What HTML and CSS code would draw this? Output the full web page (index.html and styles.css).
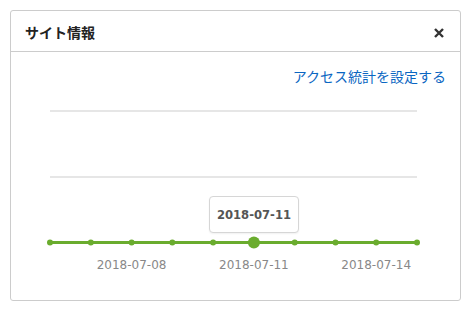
FILE: index.html
```html
<!DOCTYPE html>
<html lang="ja">
<head>
<meta charset="utf-8">
<title>サイト情報</title>
<link rel="stylesheet" href="styles.css">
</head>
<body>
<div class="card">
  <div class="card-header">
    <span class="card-title">サイト情報</span>
    <button class="close" aria-label="閉じる">
      <svg width="10" height="10" viewBox="0 0 10 10"><path d="M1 1L9 9M9 1L1 9" stroke="#333" stroke-width="2.4" stroke-linecap="butt"/></svg>
    </button>
  </div>
  <div class="card-body">
    <div class="link-row"><a class="setup-link" href="#">アクセス統計を設定する</a></div>
    <div class="chart">
      <svg class="chart-svg" width="449" height="214" viewBox="0 0 449 214">
        <line x1="39" y1="25" x2="406" y2="25" stroke="#e6e6e6" stroke-width="2"/>
        <line x1="39" y1="91" x2="406" y2="91" stroke="#e6e6e6" stroke-width="2"/>
        <line x1="39" y1="156.5" x2="406" y2="156.5" stroke="#6aac2e" stroke-width="3"/>
        <g fill="#6aac2e">
          <circle cx="39" cy="156.5" r="3"/>
          <circle cx="79.8" cy="156.5" r="3"/>
          <circle cx="120.6" cy="156.5" r="3"/>
          <circle cx="161.3" cy="156.5" r="3"/>
          <circle cx="202.1" cy="156.5" r="3"/>
          <circle cx="242.9" cy="156.5" r="6"/>
          <circle cx="283.7" cy="156.5" r="3"/>
          <circle cx="324.5" cy="156.5" r="3"/>
          <circle cx="365.2" cy="156.5" r="3"/>
          <circle cx="406" cy="156.5" r="3"/>
        </g>
        <g class="axis-label" text-anchor="middle">
          <text x="120.6" y="183">2018-07-08</text>
          <text x="242.9" y="183">2018-07-11</text>
          <text x="365.2" y="183">2018-07-14</text>
        </g>
      </svg>
      <div class="tooltip">2018-07-11</div>
    </div>
  </div>
</div>
</body>
</html>
```

FILE: styles.css
```css
html, body {
  margin: 0;
  padding: 0;
  background: #fff;
}
body {
  padding: 10px 0 0 10px;
  font-family: "DejaVu Sans", "Noto Sans CJK JP", sans-serif;
}
.card {
  width: 449px;
  height: 289px;
  border: 1px solid #cccccc;
  border-radius: 3px;
  display: flex;
  flex-direction: column;
  background: #fff;
}
.card-header {
  height: 40px;
  border-bottom: 1px solid #cccccc;
  display: flex;
  align-items: center;
  justify-content: space-between;
  padding: 0 16px 0 14px;
}
.card-title {
  font-family: "Noto Sans CJK JP", sans-serif;
  font-weight: 700;
  font-size: 14px;
  color: #222;
  line-height: 20px;
  margin-top: 2px;
}
.close {
  border: 0;
  background: none;
  padding: 0;
  width: 10px;
  height: 10px;
  margin-top: 4px;
  display: flex;
}
.card-body {
  display: flex;
  flex-direction: column;
  padding-top: 14px;
}
.link-row {
  display: flex;
  justify-content: flex-end;
  padding-right: 14px;
  height: 20px;
}
.setup-link {
  font-family: "Noto Sans CJK JP", sans-serif;
  font-size: 14px;
  line-height: 20px;
  color: #0a66c2;
  text-decoration: none;
}
.chart {
  position: relative;
  width: 449px;
  height: 214px;
}
.chart-svg {
  display: block;
}
.axis-label {
  font-family: "DejaVu Sans", sans-serif;
  font-size: 12px;
  fill: #888;
}
.tooltip {
  position: absolute;
  left: 198px;
  top: 110px;
  width: 88px;
  height: 35px;
  border: 1px solid #d6d6d6;
  border-radius: 4px;
  background: #fff;
  box-shadow: 0 1px 2px rgba(0,0,0,0.06);
  display: flex;
  align-items: center;
  justify-content: center;
  font-family: "DejaVu Sans", sans-serif;
  font-weight: 700;
  font-size: 11.6px;
  color: #555;
}
```
